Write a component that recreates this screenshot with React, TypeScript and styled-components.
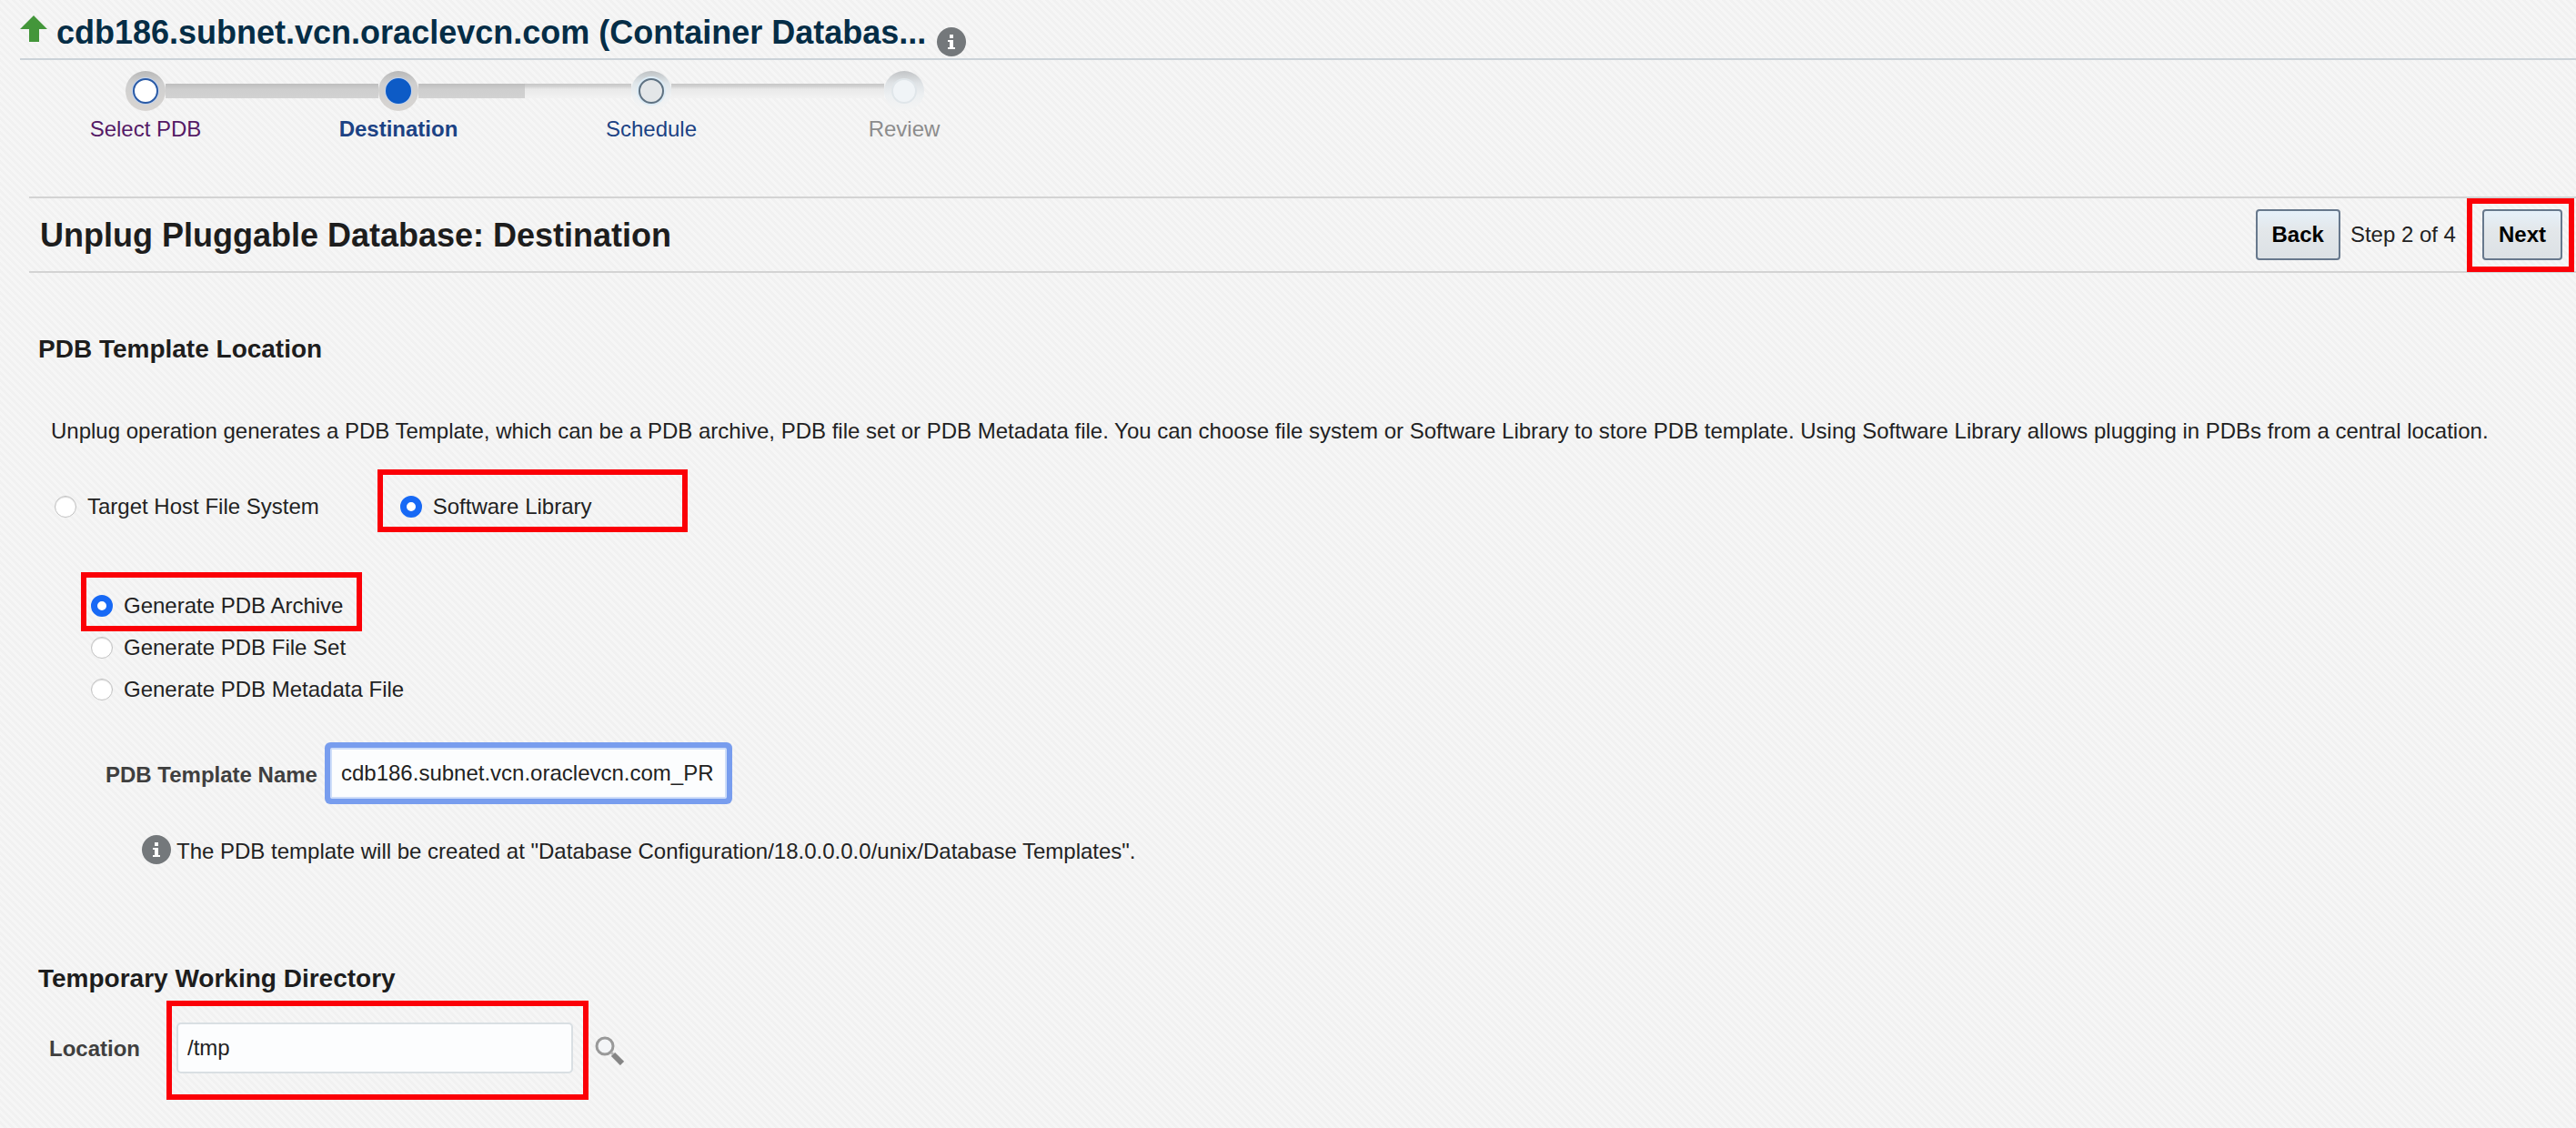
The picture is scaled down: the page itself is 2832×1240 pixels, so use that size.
import React, { useState } from "react";
import styled, { createGlobalStyle, css } from "styled-components";

const GlobalStyle = createGlobalStyle`
  *, *::before, *::after { box-sizing: border-box; }
  html { min-height: 100%; }
  body {
    margin: 0;
    color: #222;
    background-color: #f4f4f4;
    background-image: linear-gradient(45deg, #f6f6f6 25%, #f1f1f1 25% 50%, #f6f6f6 50% 75%, #f1f1f1 75%);
    background-size: 8px 8px;
    font: 24px/28px "Liberation Sans", Arial, Helvetica, sans-serif;
  }
  h1, h2, h3, p, ol { margin: 0; padding: 0; }
  button, input { font: inherit; }
`;

const Page = styled.div`
  display: flex;
  flex-direction: column;
  padding-bottom: 30px;
`;

const TargetBar = styled.header`
  display: flex;
  align-items: center;
  height: 66px;
  margin-left: 22px;
  padding-bottom: 2px;
  border-bottom: 2px solid #cbd2d8;
`;

const TargetName = styled.h1`
  margin: 10px 12px 0 10px;
  color: #052d46;
  font-size: 36px;
  line-height: 40px;
  white-space: nowrap;
`;

const IconButton = styled.button`
  display: flex;
  flex: none;
  padding: 0;
  border: 0;
  background: none;
  cursor: pointer;
`;

const LowIconButton = styled(IconButton)`
  align-self: flex-end;
`;

const Steps = styled.ol`
  display: flex;
  margin-left: 21px;
  padding-top: 12px;
  list-style: none;
`;

type StepState = "visited" | "current" | "next" | "disabled";

const track = {
  full: "linear-gradient(#bebebe, #cecece 6px, #d2d2d2)",
  open: "linear-gradient(#c6c6c6, #d2d2d2 3px, #e9e9e9 6px, #f2f2f2)",
  none: "none",
};

const Track = styled.span<{ $kind: keyof typeof track }>`
  flex: 1;
  height: 16px;
  background: ${(p) => track[p.$kind]};
`;

const Step = styled.li`
  display: flex;
  flex-direction: column;
  align-items: center;
  width: 278px;
`;

const Rail = styled.span`
  display: flex;
  align-items: center;
  align-self: stretch;
`;

const ring = {
  visited: "linear-gradient(#b8b8b8, #cfcfcf 30%, #d8d5d2)",
  current: "linear-gradient(#b8b8b8, #cfcfcf 30%, #d8d5d2)",
  next: "linear-gradient(#bfc2c4, #dfe6ea 30%, #edf0f2 60%, #f4f4f4)",
  disabled: "linear-gradient(#c2c4c6, #dfe3e6 30%, #edf0f2 60%, #f4f4f4)",
};

const dot = {
  visited: css`background: #fff; border: 2px solid #2a5aa5; box-shadow: 0 0 0 1px #c2d3ee;`,
  current: css`background: #0d5bc6; border: 2px solid #0d5bc6; box-shadow: 0 0 0 1px #c2d3ee;`,
  next: css`background: #e3e6e8; border: 2px solid #5f7282; box-shadow: 0 0 0 2px #dcebf5;`,
  disabled: css`background: #f0f4f7; border: 2px solid #e0e6ea;`,
};

const Stop = styled.span<{ $state: StepState }>`
  display: grid;
  place-items: center;
  width: 44px;
  height: 44px;
  border-radius: 50%;
  background: ${(p) => ring[p.$state]};
  &::after {
    content: "";
    width: 28px;
    height: 28px;
    border-radius: 50%;
    ${(p) => dot[p.$state]}
  }
`;

const ink = { visited: "#551a66", current: "#1c4284", next: "#1c4284", disabled: "#8c8c8c" };

const StepLink = styled.a<{ $state: StepState }>`
  margin-top: 5px;
  color: ${(p) => ink[p.$state]};
  font-weight: ${(p) => (p.$state === "current" ? 700 : 400)};
  line-height: 30px;
  text-decoration: none;
`;

const Content = styled.main`
  display: flex;
  flex-direction: column;
  margin: 59px 0 0 32px;
`;

const TitleBar = styled.div`
  display: flex;
  align-items: center;
  justify-content: space-between;
  height: 84px;
  padding: 0 2px 0 12px;
  border: solid #d3d3d3;
  border-width: 2px 0;
`;

const PageTitle = styled.h2`
  padding-top: 2px;
  color: #1d1d1d;
  font-size: 36px;
  line-height: 40px;
`;

const Actions = styled.div`
  display: flex;
  align-items: center;
  gap: 11px;
`;

const Button = styled.button`
  height: 56px;
  padding: 0 16px;
  border: 2px solid #67788c;
  border-radius: 4px;
  background: linear-gradient(#e6f1fa, #e3e7ea 40%, #dce1e5);
  color: #000;
  font-weight: 700;
  cursor: pointer;
`;

const Highlight = styled.div`
  display: flex;
  border: 6px solid #fb0007;
`;

const NextMark = styled(Highlight)`
  margin-left: 1px;
  padding: 6px 7px 7px 11px;
`;

const SectionTitle = styled.h3`
  margin-left: 10px;
  color: #1d1d1d;
  font-size: 28px;
  line-height: 32px;
`;

const TemplateSection = styled.section`
  display: flex;
  flex-direction: column;
  align-items: flex-start;
  padding-top: 68px;
`;

const Intro = styled.p`
  margin: 60px 0 0 24px;
`;

const Choices = styled.div`
  display: flex;
  align-items: baseline;
  gap: 64px;
  margin: 28px 0 0 28px;
`;

const Choice = styled.label`
  display: flex;
  align-items: center;
  gap: 12px;
  height: 28px;
  white-space: nowrap;
`;

const Radio = styled.input`
  appearance: none;
  width: 24px;
  height: 24px;
  margin: 0;
  border: 1px solid #c2c2c2;
  border-radius: 50%;
  background: #fff;
  box-shadow: inset 0 1px 1px #d8d8d8;
  &:checked {
    border: 7px solid #1769f5;
    background: #fff;
    box-shadow: none;
  }
`;

const LibraryMark = styled(Highlight)`
  width: 341px;
  padding: 21px 0 8px 19px;
`;

const ArchiveMark = styled(Highlight)`
  width: 309px;
  padding: 17px 0 8px 5px;
`;

const Formats = styled.div`
  display: flex;
  flex-direction: column;
  align-items: flex-start;
  margin: 44px 0 0 57px;
`;

const FormatRow = styled.div`
  margin: 4px 0 14px 11px;
`;

const FieldLabel = styled.label`
  color: #3f3f3f;
  font-weight: 700;
`;

const TextBox = styled.input`
  width: 436px;
  height: 56px;
  padding: 0 10px;
  border: 2px solid #d9dfe3;
  border-radius: 5px;
  outline: 0;
  background: #fcfdfe;
  color: #222;
`;

const ActiveTextBox = styled(TextBox)`
  border-color: #cfdef9;
  border-radius: 2px;
  box-shadow: 0 0 0 6px #789dee;
`;

const NameRow = styled.div`
  display: flex;
  align-items: center;
  gap: 14px;
  margin: 36px 0 0 84px;
  ${FieldLabel} { padding-top: 3px; }
`;

const Note = styled.p`
  display: flex;
  align-items: flex-end;
  gap: 6px;
  margin: 40px 0 0 124px;
`;

const DirectorySection = styled.section`
  display: flex;
  flex-direction: column;
  align-items: flex-start;
  padding-top: 110px;
`;

const LocationRow = styled.div`
  display: flex;
  align-items: center;
  margin: 8px 0 0 22px;
  ${FieldLabel} { padding-bottom: 3px; }
`;

const LocationMark = styled(Highlight)`
  margin: 0 7px 0 29px;
  padding: 18px 11px 23px 5px;
`;

const InfoIcon = () => (
  <svg width="32" height="32" viewBox="0 0 32 32" aria-hidden="true">
    <circle cx="16" cy="16" r="16" fill="#74787b" />
    <rect x="14" y="8" width="4" height="4" fill="#fff" />
    <path d="M12 14h6v8h2v2h-8v-2h2v-6h-2z" fill="#fff" />
  </svg>
);

const UpIcon = () => (
  <svg width="30" height="30" viewBox="0 0 30 30" role="img" aria-label="Up">
    <path d="M15 1 30 16H21V30H10V16H0z" fill="#43963a" />
  </svg>
);

const SearchIcon = () => (
  <svg width="32" height="32" viewBox="0 0 32 32" fill="none" aria-hidden="true">
    <circle cx="11" cy="11" r="9" fill="#f3f5f7" stroke="#999" strokeWidth="3" />
    <path d="M18 18 20 20" stroke="#b5b5b5" strokeWidth="3" />
    <path d="M20 20 30 30" stroke="#858585" strokeWidth="6" />
  </svg>
);

const steps: { name: string; state: StepState }[] = [
  { name: "Select PDB", state: "visited" },
  { name: "Destination", state: "current" },
  { name: "Schedule", state: "next" },
  { name: "Review", state: "disabled" },
];

const tracks: (keyof typeof track)[] = ["none", "full", "full", "full", "open", "open", "open", "none"];

export default function App() {
  const [store, setStore] = useState("library");
  const [format, setFormat] = useState("archive");
  const [name, setName] = useState("cdb186.subnet.vcn.oraclevcn.com_PR");
  const [location, setLocation] = useState("/tmp");

  const storeRadio = (value: string, text: string) => (
    <Choice>
      <Radio type="radio" name="store" checked={store === value} onChange={() => setStore(value)} />
      <span>{text}</span>
    </Choice>
  );
  const formatRadio = (value: string, text: string) => (
    <Choice>
      <Radio type="radio" name="format" checked={format === value} onChange={() => setFormat(value)} />
      <span>{text}</span>
    </Choice>
  );

  return (
    <Page>
      <GlobalStyle />
      <TargetBar>
        <UpIcon />
        <TargetName>cdb186.subnet.vcn.oraclevcn.com (Container Databas...</TargetName>
        <LowIconButton type="button" aria-label="Target information">
          <InfoIcon />
        </LowIconButton>
      </TargetBar>

      <Steps>
        {steps.map((s, i) => (
          <Step key={s.name}>
            <Rail>
              <Track $kind={tracks[i * 2]} />
              <Stop $state={s.state} />
              <Track $kind={tracks[i * 2 + 1]} />
            </Rail>
            <StepLink href="#" $state={s.state}>{s.name}</StepLink>
          </Step>
        ))}
      </Steps>

      <Content>
        <TitleBar>
          <PageTitle>Unplug Pluggable Database: Destination</PageTitle>
          <Actions>
            <Button type="button">Back</Button>
            <span>Step 2 of 4</span>
            <NextMark>
              <Button type="button">Next</Button>
            </NextMark>
          </Actions>
        </TitleBar>

        <TemplateSection>
          <SectionTitle>PDB Template Location</SectionTitle>
          <Intro>
            Unplug operation generates a PDB Template, which can be a PDB archive, PDB file set or PDB Metadata file. You can choose file system or Software Library to store PDB template. Using Software Library allows plugging in PDBs from a central location.
          </Intro>
          <Choices>
            {storeRadio("host", "Target Host File System")}
            <LibraryMark>{storeRadio("library", "Software Library")}</LibraryMark>
          </Choices>
          <Formats>
            <ArchiveMark>{formatRadio("archive", "Generate PDB Archive")}</ArchiveMark>
            <FormatRow>{formatRadio("fileset", "Generate PDB File Set")}</FormatRow>
            <FormatRow>{formatRadio("metadata", "Generate PDB Metadata File")}</FormatRow>
          </Formats>
          <NameRow>
            <FieldLabel htmlFor="template-name">PDB Template Name</FieldLabel>
            <ActiveTextBox id="template-name" value={name} onChange={(e) => setName(e.target.value)} />
          </NameRow>
          <Note>
            <InfoIcon />
            The PDB template will be created at "Database Configuration/18.0.0.0.0/unix/Database Templates".
          </Note>
        </TemplateSection>

        <DirectorySection>
          <SectionTitle>Temporary Working Directory</SectionTitle>
          <LocationRow>
            <FieldLabel htmlFor="location">Location</FieldLabel>
            <LocationMark>
              <TextBox id="location" value={location} onChange={(e) => setLocation(e.target.value)} />
            </LocationMark>
            <IconButton type="button" aria-label="Search location">
              <SearchIcon />
            </IconButton>
          </LocationRow>
        </DirectorySection>
      </Content>
    </Page>
  );
}
